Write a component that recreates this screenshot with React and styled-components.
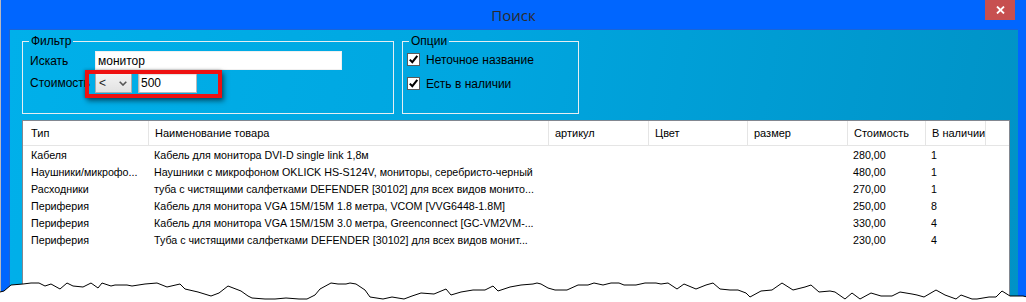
import React from 'react'
import styled, { createGlobalStyle } from 'styled-components'

const GlobalStyle = createGlobalStyle`
  html, body {
    margin: 0;
    padding: 0;
    background: #ffffff;
  }
  body {
    width: 1026px;
    height: 302px;
    overflow: hidden;
    font-family: "Liberation Sans", Arial, sans-serif;
    font-size: 11px;
    color: #000;
  }
`

const Screen = styled.div`
  position: relative;
  display: flex;
  width: 1026px;
  height: 302px;
  overflow: hidden;
`

const Behind = styled.div`
  width: 2px;
  background: #e4e4e4;
  border-right: 1px solid #b8b8c0;
  box-sizing: border-box;
`

const Window = styled.div`
  flex: 1;
  display: flex;
  flex-direction: column;
  background: #0066ff;
  padding: 0 8px;
`

const TitleBar = styled.div`
  position: relative;
  height: 29px;
  flex: none;
  display: flex;
  align-items: center;
  justify-content: center;
  font-family: "Open Sans", "Noto Sans", sans-serif;
  font-size: 15px;
  color: #2b2b2b;
`

const CloseButton = styled.div`
  position: absolute;
  top: 0;
  right: 3px;
  width: 30px;
  height: 20px;
  background: #c75050;
  color: #fff;
  display: flex;
  align-items: center;
  justify-content: center;
`

const Client = styled.div`
  flex: 1;
  display: flex;
  flex-direction: column;
  gap: 6px;
  padding: 4px 8px 0 12px;
  border-top: 1px solid #1a63d8;
  border-left: 1px solid #1a63d8;
  background: linear-gradient(100deg, #00b0ea 0%, #00a6e0 45%, #0092c6 100%);
`

const TopRow = styled.div`
  display: flex;
  gap: 8px;
`

const GroupBox = styled.fieldset`
  margin: 0;
  padding: 0;
  box-sizing: border-box;
  width: ${p => p.$width}px;
  height: 80px;
  border: 1px solid #e6eef2;
  min-width: 0;
`

const Legend = styled.legend`
  margin-left: 6px;
  padding: 0 2px;
  font-size: 12px;
  line-height: 14px;
  color: #000;
`

const FilterGrid = styled.div`
  display: grid;
  grid-template-columns: 65px auto;
  row-gap: 3px;
  align-items: center;
  padding: 3px 0 0 7px;
`

const Label = styled.span`
  font-size: 12px;
  color: #000;
  white-space: nowrap;
`

const TextBox = styled.div`
  box-sizing: border-box;
  width: ${p => p.$width}px;
  height: ${p => p.$height}px;
  background: #fff;
  border: 1px solid ${p => (p.$sunken ? '#b9b9b9' : '#f0f0f0')};
  box-shadow: ${p => (p.$sunken ? 'inset 1px 1px 1px rgba(0,0,0,0.12)' : 'none')};
  padding: 0 2px;
  display: flex;
  align-items: center;
  font-size: 12px;
`

const PriceRow = styled.div`
  display: flex;
  gap: 6px;
  align-items: center;
`

const Combo = styled.div`
  box-sizing: border-box;
  width: 37px;
  height: 20px;
  border: 1px solid #acacac;
  background: linear-gradient(#f3f3f3, #e2e2e2);
  display: flex;
  align-items: center;
  justify-content: space-between;
  padding: 0 4px 0 3px;
  font-size: 12px;
  color: #222;
`

const OptionList = styled.div`
  display: flex;
  flex-direction: column;
  gap: 11px;
  padding: 5px 0 0 4px;
`

const CheckRow = styled.div`
  display: flex;
  align-items: center;
  gap: 6px;
  height: 13px;
`

const CheckBox = styled.span`
  box-sizing: border-box;
  width: 13px;
  height: 13px;
  border: 1px solid #5a5a5a;
  background: #fff;
  display: flex;
  align-items: center;
  justify-content: center;
`

const Table = styled.div`
  flex: 1;
  display: flex;
  flex-direction: column;
  width: 988px;
  box-sizing: border-box;
  border: 1px solid #828790;
  background: #fff;
`

const Row = styled.div`
  display: grid;
  grid-template-columns: 125px 400px 100px 99px 100px 78px 60px 1fr;
  box-sizing: border-box;
  height: ${p => (p.$head ? 25 : 17)}px;
  align-items: center;
  border-bottom: ${p => (p.$head ? '1px solid #e5e5e5' : 'none')};
`

const Cell = styled.div`
  height: 100%;
  display: flex;
  align-items: center;
  box-sizing: border-box;
  padding-left: ${p => (p.$first ? 8 : 6)}px;
  border-left: ${p => (p.$head && !p.$first ? '1px solid #e5e5e5' : 'none')};
  white-space: nowrap;
  overflow: hidden;
  font-size: ${p => (p.$head ? 11 : 10.7)}px;
  color: #000;
`

const Annotation = styled.div`
  position: absolute;
  left: 85px;
  top: 70px;
  width: 137px;
  height: 28px;
  box-sizing: border-box;
  border: 4px solid #ee1111;
  box-shadow: 2px 3px 5px rgba(0, 0, 0, 0.5), -1px 0 3px rgba(0, 0, 0, 0.25);
  pointer-events: none;
`

const Torn = styled.svg`
  position: absolute;
  left: 0;
  bottom: 0;
  display: block;
`

const headers = ['Тип', 'Наименование товара', 'артикул', 'Цвет', 'размер', 'Стоимость', 'В наличии', '']

const rows = [
  ['Кабеля', 'Кабель для монитора DVI-D single link 1,8м', '280,00', '1'],
  ['Наушники/микрофо...', 'Наушники с микрофоном OKLICK HS-S124V, мониторы, серебристо-черный', '480,00', '1'],
  ['Расходники', 'туба с чистящими салфетками DEFENDER [30102] для всех видов монито...', '270,00', '1'],
  ['Периферия', 'Кабель для монитора VGA 15M/15M 1.8 метра, VCOM [VVG6448-1.8M]', '250,00', '8'],
  ['Периферия', 'Кабель для монитора VGA 15M/15M 3.0 метра, Greenconnect [GC-VM2VM-...', '330,00', '4'],
  ['Периферия', 'Туба с чистящими салфетками DEFENDER [30102] для всех видов монит...', '230,00', '4'],
]

// jagged "torn paper" line at the bottom of the screenshot
const tornPoints = (() => {
  let seed = 11
  const rnd = () => {
    seed = (seed * 16807) % 2147483647
    return (seed - 1) / 2147483646
  }
  const pts = []
  let x = 0
  let y = 12
  while (x < 1040) {
    pts.push([Math.round(x), Math.round(y)])
    x += 4 + rnd() * 9
    y = Math.max(3, Math.min(19, y + (rnd() - 0.5) * 14))
  }
  return pts
})()

const Check = () => (
  <CheckBox>
    <svg width="11" height="11" viewBox="0 0 11 11">
      <path d="M1.8 5.6 L4.3 8.2 L9.3 1.8" fill="none" stroke="#000" strokeWidth="2" />
    </svg>
  </CheckBox>
)

export default function App() {
  const line = tornPoints.map(p => p.join(',')).join(' ')
  return (
    <>
      <GlobalStyle />
      <Screen>
        <Behind />
        <Window>
          <TitleBar>
            Поиск
            <CloseButton>
              <svg width="9" height="8" viewBox="0 0 9 8">
                <path d="M1 0.5 L8 7.5 M8 0.5 L1 7.5" stroke="#fff" strokeWidth="1.8" />
              </svg>
            </CloseButton>
          </TitleBar>
          <Client>
            <TopRow>
              <GroupBox $width={372}>
                <Legend>Фильтр</Legend>
                <FilterGrid>
                  <Label>Искать</Label>
                  <TextBox $width={247} $height={19}>монитор</TextBox>
                  <Label>Стоимость</Label>
                  <PriceRow>
                    <Combo>
                      <span>&lt;</span>
                      <svg width="8" height="5" viewBox="0 0 8 5">
                        <path d="M0.7 0.7 L4 4 L7.3 0.7" fill="none" stroke="#555" strokeWidth="1.6" />
                      </svg>
                    </Combo>
                    <TextBox $width={59} $height={20} $sunken>500</TextBox>
                  </PriceRow>
                </FilterGrid>
              </GroupBox>
              <GroupBox $width={177}>
                <Legend>Опции</Legend>
                <OptionList>
                  <CheckRow>
                    <Check />
                    <Label>Неточное название</Label>
                  </CheckRow>
                  <CheckRow>
                    <Check />
                    <Label>Есть в наличии</Label>
                  </CheckRow>
                </OptionList>
              </GroupBox>
            </TopRow>
            <Table>
              <Row $head>
                {headers.map((h, i) => (
                  <Cell key={i} $head $first={i === 0}>{h}</Cell>
                ))}
              </Row>
              {rows.map((r, i) => (
                <Row key={i}>
                  <Cell $first>{r[0]}</Cell>
                  <Cell>{r[1]}</Cell>
                  <Cell />
                  <Cell />
                  <Cell />
                  <Cell>{r[2]}</Cell>
                  <Cell>{r[3]}</Cell>
                  <Cell />
                </Row>
              ))}
            </Table>
          </Client>
        </Window>
        <Annotation />
        <Torn width="1026" height="22" viewBox="0 0 1026 22">
          <polygon points={`${line} 1040,22 0,22`} fill="#fff" />
          <polyline points={line} fill="none" stroke="#000" strokeWidth="1" />
        </Torn>
      </Screen>
    </>
  )
}
